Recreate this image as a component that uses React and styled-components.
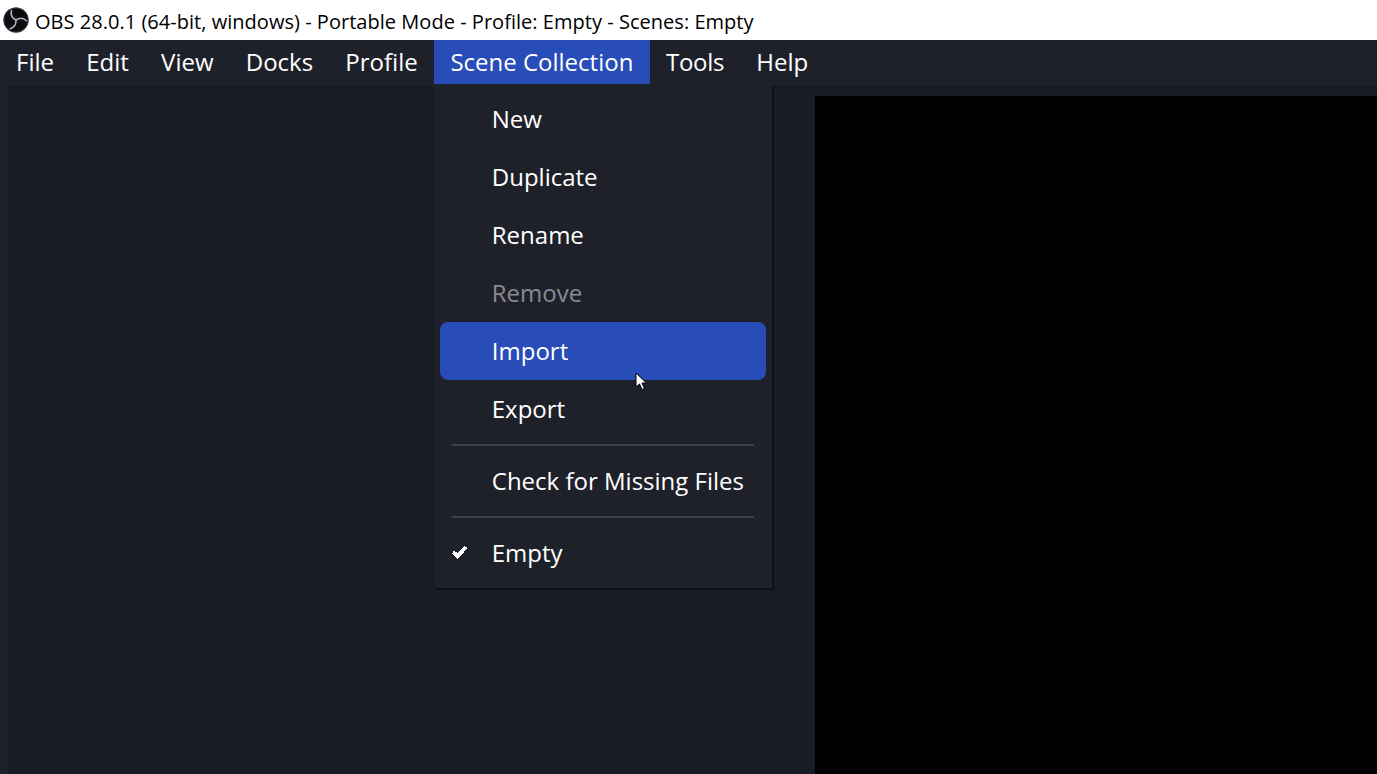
import React from 'react';
import styled, { createGlobalStyle } from 'styled-components';

const Global = createGlobalStyle`
  html, body { margin: 0; padding: 0; height: 100%; overflow: hidden; background: #1f212a; }
  #root { height: 100%; }
`;

const Window = styled.div`
  width: 1377px; height: 774px; display: flex; flex-direction: column;
  position: relative; overflow: hidden; background: #1f212a;
`;

const TitleBar = styled.header`
  height: 40px; flex: none; background: #fff; display: flex; align-items: center;
  padding-left: 3px; gap: 6px; box-sizing: border-box;
  font: 20px/1 "Open Sans", "Noto Sans", sans-serif; color: #000; letter-spacing: 0.03px;
`;

const TitleText = styled.span`
  margin-top: 4px;
`;

const MenuBar = styled.nav`
  height: 44px; flex: none; display: flex; background: #1f212a;
`;

const MenuItem = styled.div`
  position: relative; height: 44px; box-sizing: border-box;
  padding: 0 ${p => (p.$open ? '16.6px' : '16.1px')};
  display: flex; align-items: center;
  font: 24px/1 "Open Sans", "Noto Sans", sans-serif; color: #fff;
  letter-spacing: ${p => (p.$tight ? '-0.3px' : '0')};
  background: ${p => (p.$open ? '#284cb8' : 'transparent')};
`;

const Body = styled.main`
  flex: 1; display: flex; padding: 2px 0 0 8px; min-height: 0;
`;

const DockArea = styled.section`
  flex: 1; background: #191b26; display: flex; justify-content: flex-end; padding-top: 10px;
`;

const Preview = styled.div`
  width: 562px; background: #000;
`;

const Dropdown = styled.div`
  position: absolute; left: 0; top: 44px; width: 338px; box-sizing: border-box;
  padding: 6px; background: #1f212a; display: flex; flex-direction: column;
  box-shadow: 2px 2px 0 #101118; z-index: 2;
`;

const Entry = styled.div`
  position: relative; height: 58px; flex: none; box-sizing: border-box; padding-left: 52px;
  display: flex; align-items: center; border-radius: 8px; white-space: nowrap;
  color: ${p => (p.$disabled ? '#8a8b91' : '#fff')};
  background: ${p => (p.$active ? '#284cb8' : 'transparent')};
`;

const Separator = styled.div`
  height: 2px; margin: 6px 12px; background: #3c404d; flex: none;
`;

const Check = styled.svg`
  position: absolute; left: 12px; top: 21px; width: 16px; height: 14px;
`;

const Cursor = styled.svg`
  position: absolute; left: 635px; top: 372px; width: 13px; height: 19px; z-index: 3;
`;

const arm = 'M13 13C9.8 11.4 7.2 8.6 8.4 3.6';

const Logo = () => (
  <svg width="26" height="26" viewBox="0 0 26 26">
    <circle cx="13" cy="13" r="12.6" fill="#0c0c10" />
    <circle cx="13" cy="13" r="12.1" fill="none" stroke="#4a4a52" strokeWidth="0.7" />
    <g fill="none" stroke="#b8b8c0" strokeWidth="1.5" strokeLinecap="round">
      <path d={arm} />
      <path d={arm} transform="rotate(120 13 13)" />
      <path d={arm} transform="rotate(240 13 13)" />
    </g>
  </svg>
);

const top = ['File', 'Edit', 'View', 'Docks', 'Profile'];

export default function App() {
  return (
    <Window>
      <Global />
      <TitleBar>
        <Logo />
        <TitleText>OBS 28.0.1 (64-bit, windows) - Portable Mode - Profile: Empty - Scenes: Empty</TitleText>
      </TitleBar>
      <MenuBar>
        {top.map(t => <MenuItem key={t}>{t}</MenuItem>)}
        <MenuItem $open>
          Scene Collection
          <Dropdown>
            <Entry>New</Entry>
            <Entry>Duplicate</Entry>
            <Entry>Rename</Entry>
            <Entry $disabled>Remove</Entry>
            <Entry $active>Import</Entry>
            <Entry>Export</Entry>
            <Separator />
            <Entry>Check for Missing Files</Entry>
            <Separator />
            <Entry>
              <Check viewBox="0 0 16 14" shapeRendering="crispEdges">
                <path d="M1 7L5.5 11L14 2" fill="none" stroke="#fff" strokeWidth="4" />
              </Check>
              Empty
            </Entry>
          </Dropdown>
        </MenuItem>
        <MenuItem $tight>Tools</MenuItem>
        <MenuItem>Help</MenuItem>
      </MenuBar>
      <Body>
        <DockArea>
          <Preview />
        </DockArea>
      </Body>
      <Cursor viewBox="0 0 13 19">
        <path d="M1 1V15L4.5 12L7 17.5L9.5 16.5L7 11H11.5Z" fill="#fff" stroke="#000" strokeWidth="1" />
      </Cursor>
    </Window>
  );
}
